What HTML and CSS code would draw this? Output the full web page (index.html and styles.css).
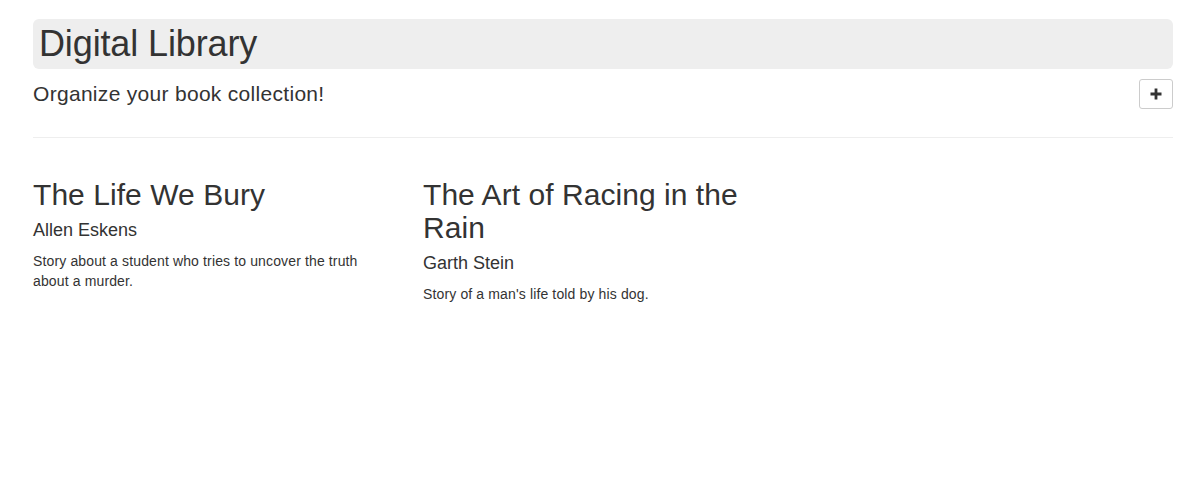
FILE: index.html
```html
<!DOCTYPE html>
<html>
<head>
<meta charset="utf-8">
<title>Digital Library</title>
<link rel="stylesheet" href="styles.css">
</head>
<body>
<div class="container">
  <header class="page-head">
    <h1 class="title">Digital Library</h1>
    <div class="sub-row">
      <p class="lead">Organize your book collection!</p>
      <button class="btn" type="button" aria-label="Add book">
        <svg width="12" height="12" viewBox="0 0 12 12"><path d="M4.6 0.5h2.8v4.1h4.1v2.8H7.4v4.1H4.6V7.4H0.5V4.6h4.1z" fill="#333"/></svg>
      </button>
    </div>
  </header>
  <hr class="divider">
  <div class="books">
    <div class="book">
      <h2 class="book-title">The Life We Bury</h2>
      <h4 class="book-author">Allen Eskens</h4>
      <p class="book-desc">Story about a student who tries to uncover the truth about a murder.</p>
    </div>
    <div class="book">
      <h2 class="book-title">The Art of Racing in the Rain</h2>
      <h4 class="book-author">Garth Stein</h4>
      <p class="book-desc">Story of a man's life told by his dog.</p>
    </div>
  </div>
</div>
</body>
</html>
```

FILE: styles.css
```css
* { box-sizing: border-box; }
html, body { margin: 0; padding: 0; background: #fff; }
body {
  font-family: "Liberation Sans", Arial, Helvetica, sans-serif;
  font-size: 14px;
  line-height: 20px;
  color: #333;
}
.container {
  width: 1140px;
  margin-left: 33px;
}
.page-head { padding-top: 19px; }
.title {
  margin: 0;
  padding: 5px 6px;
  background: #eee;
  border-radius: 6px;
  font-size: 36px;
  font-weight: 400;
  line-height: 40px;
  letter-spacing: -0.13px;
}
.sub-row {
  display: flex;
  align-items: center;
  justify-content: space-between;
  margin-top: 10px;
  height: 30px;
}
.lead {
  margin: 0;
  font-size: 21px;
  line-height: 30px;
  font-weight: 300;
  letter-spacing: 0.3px;
}
.btn {
  width: 34px;
  height: 30px;
  padding: 0;
  display: flex;
  align-items: center;
  justify-content: center;
  background: #fff;
  border: 1px solid #ccc;
  border-radius: 3px;
}
.divider {
  margin: 28px 0 0;
  border: 0;
  border-top: 1px solid #eee;
}
.books {
  display: grid;
  grid-template-columns: repeat(3, 360px);
  column-gap: 30px;
  margin-top: 40px;
}
.book-title {
  margin: 0 0 9px;
  font-size: 30px;
  font-weight: 400;
  line-height: 33px;
  letter-spacing: 0.05px;
}
.book-author {
  margin: 0 0 11px;
  font-size: 18px;
  font-weight: 400;
  line-height: 20px;
}
.book-desc {
  margin: 0;
  letter-spacing: 0.135px;
}
```
